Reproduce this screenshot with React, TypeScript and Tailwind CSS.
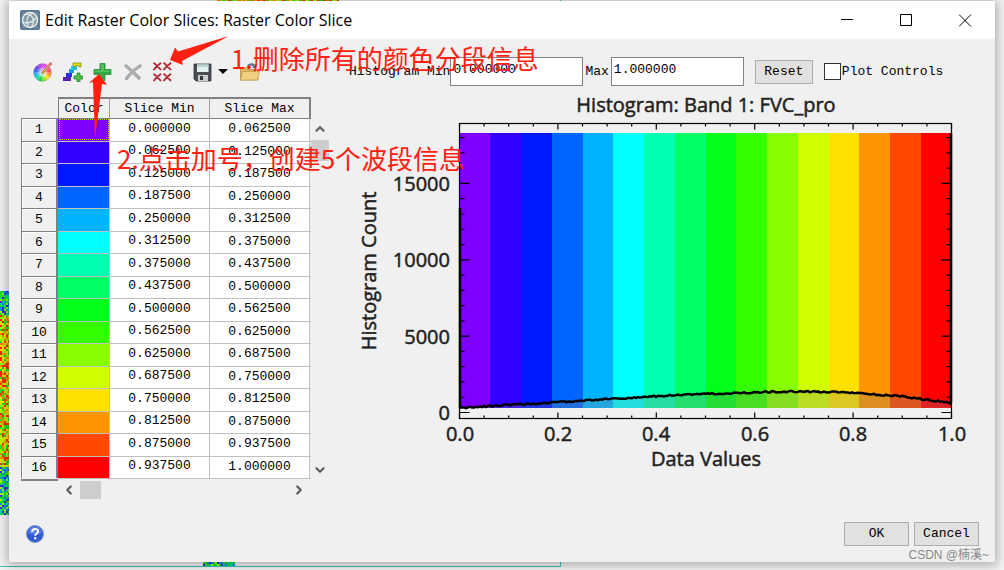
import { ReactNode } from "react";
import { ChevronDown, ChevronLeft, ChevronRight, ChevronUp } from "lucide-react";

const SLICES = [
  { color: "#7f00ff", min: "0.000000", max: "0.062500" },
  { color: "#3300ff", min: "0.062500", max: "0.125000" },
  { color: "#0019ff", min: "0.125000", max: "0.187500" },
  { color: "#0066ff", min: "0.187500", max: "0.250000" },
  { color: "#00b2ff", min: "0.250000", max: "0.312500" },
  { color: "#00ffff", min: "0.312500", max: "0.375000" },
  { color: "#00ffb2", min: "0.375000", max: "0.437500" },
  { color: "#00ff66", min: "0.437500", max: "0.500000" },
  { color: "#00ff19", min: "0.500000", max: "0.562500" },
  { color: "#33ff00", min: "0.562500", max: "0.625000" },
  { color: "#88ff00", min: "0.625000", max: "0.687500" },
  { color: "#d0ff00", min: "0.687500", max: "0.750000" },
  { color: "#ffe100", min: "0.750000", max: "0.812500" },
  { color: "#ff9500", min: "0.812500", max: "0.875000" },
  { color: "#ff4800", min: "0.875000", max: "0.937500" },
  { color: "#ff0000", min: "0.937500", max: "1.000000" },
];

// small repeatable pseudo random, so every render draws the same speckles
const rand = (n: number) => {
  const s = Math.sin(n * 12.9898 + 4.1) * 43758.5453;
  return s - Math.floor(s);
};

const SPECKLE = ["#ff2a00", "#ff8a00", "#ffe100", "#9dff00", "#22e022", "#00d9a0", "#0090ff", "#3a30e0"];

const Raster = ({ cols, rows, cell, tone = "mixed", className }: { cols: number; rows: number; cell: number; tone?: "mixed" | "warm" | "cold"; className: string }) => (
  <svg className={className} width={cols * cell} height={rows * cell} shapeRendering="crispEdges" aria-hidden="true">
    {Array.from({ length: cols * rows }, (_, i) => {
      const y = Math.floor(i / cols);
      const cold = tone === "cold" || (tone === "mixed" && (y < 12 || y > rows - 25));
      const pick = cold ? 3 + Math.floor(rand(i) * 5) : Math.floor(rand(i) * 5);
      return <rect key={i} x={(i % cols) * cell} y={y * cell} width={cell} height={cell} fill={SPECKLE[pick]} />;
    })}
  </svg>
);

const ToolButton = ({ label, children, className = "" }: { label: string; children: ReactNode; className?: string }) => (
  <button type="button" aria-label={label} className={`flex size-5 shrink-0 items-center justify-center ${className}`}>
    {children}
  </button>
);

const AppIcon = () => (
  <svg className="size-5 shrink-0" viewBox="0 0 20 20" aria-hidden="true">
    <rect width="20" height="20" rx="2" fill="#6d8aa3" />
    <rect x="1" y="1" width="18" height="18" rx="1" fill="none" stroke="#4d6a85" />
    <circle cx="10" cy="10" r="7.5" fill="#8b9daa" stroke="#e8ecef" strokeWidth="1.4" />
    <path d="M4 5c4-2 8 0 9 4s0 6-2 8M3 12c3 2 9 1 13-4M12 3c-5 3-6 8-4 13" fill="none" stroke="#e3e8eb" strokeWidth="1.3" />
  </svg>
);

const WHEEL = ["#ff6fd0", "#ff5a5a", "#ff9a3c", "#ffe23c", "#9be83c", "#2fd24a", "#27d9b0", "#2fb4f0", "#3c6cf0", "#7a4cf0", "#b84cf0", "#f04cf0"];

const ColorWheelIcon = () => (
  <svg className="size-5" viewBox="0 0 20 20">
    {WHEEL.map((c, i) => {
      const a = ((i * 30 - 60) * Math.PI) / 180;
      const b = ((i * 30 - 29) * Math.PI) / 180;
      return (
        <path key={c} fill={c} d={`M9.5 10.5L${9.5 + 9 * Math.cos(a)} ${10.5 + 9 * Math.sin(a)}A9 9 0 0 1 ${9.5 + 9 * Math.cos(b)} ${10.5 + 9 * Math.sin(b)}Z`} />
      );
    })}
    <circle cx="9.5" cy="10.5" r="5" fill="#fff" opacity=".35" />
    <circle cx="9.5" cy="10.5" r="3" fill="#fff" opacity=".45" />
    <circle cx="9.5" cy="10.5" r="8.6" fill="none" stroke="#777" strokeWidth=".6" opacity=".5" />
    <path d="M9 11.500L16 3.500" stroke="#8a6a2a" strokeWidth="2.2" />
    <path d="M9.500 11L16 3.500" stroke="#f2cf7a" strokeWidth="1.1" />
    <path d="M16 3.500L18.500 1" stroke="#d9737a" strokeWidth="3" />
  </svg>
);

const RampIcon = () => (
  <svg className="size-5" viewBox="0 0 20 20">
    <path d="M0 19v-4h4v-2h4v6z" fill="#5b1fb0" />
    <path d="M3 15v-4h6v4z" fill="#2a32e0" />
    <path d="M6 11V7h5v4z" fill="#1597f0" />
    <path d="M8 7V4h6v4H8z" fill="#17cbd0" />
    <path d="M10 4V1h8v4h-2V3.500h-3V5z" fill="#e6dc20" stroke="#8c8a10" strokeWidth=".8" />
    <path d="M14 11h3v3h3v3h-3v3h-3v-3h-3v-3h3z" fill="#4cc24c" stroke="#1f8a2a" strokeWidth=".8" />
  </svg>
);

const PlusIcon = () => (
  <svg className="size-5" viewBox="0 0 20 20">
    <path d="M7 1.500h5v6h6v5h-6v6H7v-6H1v-5h6z" fill="#35a845" stroke="#23913a" strokeWidth=".8" strokeLinejoin="round" />
    <path d="M8 2.500h3v6h6V10H2V8.500h6z" fill="#6fce72" opacity=".6" />
  </svg>
);

const DeleteIcon = () => (
  <svg className="size-5" viewBox="0 0 20 20">
    <path d="M3 4c4 3 9 8 13 12M17 4C12 7 7 12 3.500 16.500" fill="none" stroke="#9c9c9c" strokeWidth="3.2" strokeLinecap="round" />
    <path d="M3 4c4 3 9 8 13 12M16.500 4C12 7 7 12 3.500 16.500" fill="none" stroke="#b8b8b8" strokeWidth="1.200" />
  </svg>
);

const DeleteAllIcon = () => (
  <svg className="size-5" viewBox="0 0 20 20">
    {[[0, 0], [10, 0], [0, 11], [10, 11]].map(([x, y]) => (
      <g key={`${x}-${y}`} transform={`translate(${x} ${y})`}>
        <path d="M.5 .8c3 2 5 4.500 7.500 7.200M8 .8C5.500 3 2.500 5 .5 8" fill="none" stroke="#b52a35" strokeWidth="1.800" />
      </g>
    ))}
  </svg>
);

const SaveIcon = () => (
  <svg className="size-5" viewBox="0 0 20 20">
    <path d="M1 2h17v17H3l-2-2z" fill="#4a4e52" stroke="#33373a" strokeWidth=".8" />
    <path d="M4 2.500h11.500V10H4z" fill="#e4f0f0" />
    <path d="M4 2.500h11.500V5H4z" fill="#bdd3d6" />
    <path d="M5 13h10v6H5z" fill="#c9cccf" />
    <path d="M7 14h3v4H7z" fill="#35383b" />
  </svg>
);

const FolderIcon = () => (
  <svg className="size-5" viewBox="0 0 20 20">
    <path d="M7 4c1-3 6-4 8-1l1-1v4h-4l1.500-1.500C12 3 9 3 8 5z" fill="#54708c" />
    <path d="M.5 5.500H7l1.500 2H18V18H.5z" fill="#dcb35c" stroke="#b98c34" strokeWidth=".7" />
    <path d="M2.500 9.500h17l-2 8.500H.5z" fill="#f1cf83" stroke="#c39a44" strokeWidth=".7" />
  </svg>
);

const HelpIcon = () => (
  <svg className="size-[18px]" viewBox="0 0 18 18">
    <circle cx="9" cy="9" r="8.500" fill="#2f5bd0" stroke="#7d93c9" strokeWidth="1" />
    <path d="M2 8a7 7 0 0 1 14 0c-4 2-10 2-14 0z" fill="#6f93ea" opacity=".6" />
    <path d="M6.200 7c0-4 6-4 5.800-.5C12 8.500 9.200 8.600 9.200 10.800" fill="none" stroke="#fff" strokeWidth="2" />
    <rect x="8.100" y="12.200" width="2.200" height="2.200" fill="#fff" />
  </svg>
);

const TitleBar = () => (
  <header className="flex h-[38px] items-center bg-white pl-[11px]">
    <AppIcon />
    <h1 className="ml-[5px] flex-1 font-['Open_Sans',sans-serif] text-base leading-5 text-black">
      Edit Raster Color Slices: Raster Color Slice
    </h1>
    <button type="button" aria-label="Minimize" className="flex h-full w-[59px] items-center justify-center">
      <svg width="13" height="13" stroke="#000"><path d="M0 5.500h12" /></svg>
    </button>
    <button type="button" aria-label="Maximize" className="flex h-full w-[59px] items-center justify-center">
      <svg width="13" height="13" fill="none" stroke="#000"><path d="M.5 .5h11v11H.5z" /></svg>
    </button>
    <button type="button" aria-label="Close" className="flex h-full w-[59px] items-center justify-center">
      <svg width="13" height="13" stroke="#000"><path d="M0 .5l12 12M12 .5l-12 12" /></svg>
    </button>
  </header>
);

const Toolbar = () => (
  <div className="flex items-center pt-[18px] pl-6">
    <div className="flex gap-[10px]">
      <ToolButton label="Edit color"><ColorWheelIcon /></ToolButton>
      <ToolButton label="New default slices"><RampIcon /></ToolButton>
      <ToolButton label="Add slice"><PlusIcon /></ToolButton>
      <ToolButton label="Delete slice"><DeleteIcon /></ToolButton>
      <ToolButton label="Clear all slices"><DeleteAllIcon /></ToolButton>
    </div>
    <ToolButton label="Save" className="ml-5"><SaveIcon /></ToolButton>
    <button type="button" aria-label="Save options" className="ml-[5px] w-[10px]">
      <svg width="10" height="6"><path d="M0 0h10L5 5z" /></svg>
    </button>
    <ToolButton label="Open" className="ml-3"><FolderIcon /></ToolButton>
    <label htmlFor="hist-min" className="ml-[89px] shrink-0 whitespace-nowrap">Histogram Min</label>
    <input id="hist-min" defaultValue="0.000000" className="h-[29px] w-[133px] border border-[#828282] bg-white px-[2px] pb-1" />
    <label htmlFor="hist-max" className="ml-[2px]">Max</label>
    <input id="hist-max" defaultValue="1.000000" className="ml-[2px] h-[29px] w-[133px] border border-[#828282] bg-white px-[2px] pb-1" />
    <button type="button" className="ml-[11px] h-6 w-[58px] border border-[#adadad] bg-[#e1e1e1]">Reset</button>
    <input id="plot-controls" type="checkbox" className="ml-[11px] size-[17px] shrink-0 appearance-none border border-[#333] bg-white" />
    <label htmlFor="plot-controls" className="ml-px whitespace-nowrap">Plot Controls</label>
  </div>
);

const SliceTable = () => (
  <div className="w-[309px] shrink-0 pt-[10px]">
    <div className="flex">
      <table className="w-[290px] table-fixed border-separate border-spacing-0 text-center">
        <colgroup>
          <col className="w-[37px]" />
          <col className="w-[52px]" />
          <col className="w-[100px]" />
          <col className="w-[101px]" />
        </colgroup>
        <thead>
          <tr className="h-[21px] leading-4">
            <td className="p-0" />
            <th className="border-t-2 border-r border-l border-[#808080] border-r-[#a0a0a0] p-0 font-normal">Color</th>
            <th className="border-t-2 border-r border-t-[#808080] border-r-[#a0a0a0] p-0 font-normal">Slice Min</th>
            <th className="border-t-2 border-r-2 border-[#808080] p-0 font-normal">Slice Max</th>
          </tr>
        </thead>
        <tbody>
          {SLICES.map((slice, i) => (
            <tr key={slice.min} className="leading-4 odd:h-[23px] even:h-[22px]">
              <th className="border-t border-r-2 border-l border-[#808080] bg-[#f0f0f0] p-0 font-normal shadow-[inset_1px_1px_0_#fff]">
                {i + 1}
              </th>
              <td
                className={`border-t border-r p-0 ${i === 0 ? "border-t-[#808080] border-r-[#c0c0c0] outline-1 -outline-offset-2 outline-dotted outline-[#a5e02a]" : "border-[#c0c0c0]"}`}
                style={{ backgroundColor: slice.color }}
              />
              <td className={`border-t border-r border-[#c0c0c0] bg-white p-0 pb-[3px] ${i === 0 ? "border-t-[#808080]" : ""}`}>
                {slice.min}
              </td>
              <td className={`border-t p-0 ${i === 0 ? "border-[#808080]" : "border-[#c0c0c0]"}`}>
                <div className={`mr-px border-r border-[#c0c0c0] bg-white pt-[2px] ${i % 2 ? "h-[21px]" : "h-[22px]"}`}>{slice.max}</div>
              </td>
            </tr>
          ))}
        </tbody>
        <tfoot>
          <tr className="h-[3px]">
            <td className="border-b-2 border-[#808080] p-0" />
            <td colSpan={3} className="border-t border-[#c0c0c0] p-0" />
          </tr>
        </tfoot>
      </table>
      <div className="mt-[21px] flex w-[18px] flex-col items-center text-[#606060]">
        <button type="button" aria-label="Scroll up" className="flex h-[22px] items-center">
          <ChevronUp size={14} strokeWidth={4} />
        </button>
        <div className="h-[21px] w-full bg-[#cdcdcd]" />
        <div className="flex-1" />
        <button type="button" aria-label="Scroll down" className="flex h-[22px] items-center">
          <ChevronDown size={14} strokeWidth={4} />
        </button>
      </div>
    </div>
    <div className="flex h-[18px] w-[288px] items-center pl-9 text-[#606060]">
      <button type="button" aria-label="Scroll left" className="flex w-[23px] justify-center">
        <ChevronLeft size={14} strokeWidth={4} />
      </button>
      <div className="h-full w-[21px] bg-[#cdcdcd]" />
      <div className="flex-1" />
      <button type="button" aria-label="Scroll right" className="flex w-5 justify-center">
        <ChevronRight size={14} strokeWidth={4} />
      </button>
    </div>
  </div>
);

// plot geometry, in the units of the chart's viewBox
const LEFT = 459.5;
const RIGHT = 951.5;
const TOP = 123.5;
const BOTTOM = 418.5;
const ZERO = 412.5;
const PER_1000 = 15.27;

const CURVE = [[460, 408], [510, 405], [560, 402], [620, 398.5], [660, 396], [690, 394.5], [740, 393], [780, 391.5], [835, 392], [870, 394], [900, 396], [930, 400], [950, 403]];

const curvePoints = () => {
  const points: string[] = [];
  for (let x = 460; x <= 950; x += 2) {
    const k = Math.max(1, CURVE.findIndex(([cx]) => cx >= x));
    const [x0, y0] = CURVE[k - 1];
    const [x1, y1] = CURVE[k];
    const y = y0 + ((y1 - y0) * (x - x0)) / (x1 - x0) + (rand(x) - 0.5) * 1.6;
    points.push(`${x},${y.toFixed(1)}`);
  }
  return points.join(" ");
};

const Histogram = () => {
  const line = curvePoints();
  const step = (RIGHT - LEFT) / 16;
  return (
    <svg
      viewBox="350 92 635 385"
      className="h-auto min-w-0 flex-1 font-['Open_Sans',sans-serif] text-[20px]"
      role="img"
      aria-label="Histogram of band 1"
    >
      <g shapeRendering="crispEdges">
        {SLICES.map((slice, i) => {
          const x = Math.round(LEFT + i * step);
          return <rect key={slice.min} x={x} y="133" width={Math.round(LEFT + (i + 1) * step) - x} height="275" fill={slice.color} />;
        })}
      </g>
      <polygon points={`460,408 ${line} 951,408`} fill="#808080" opacity=".27" />
      <polyline points={`460,208 460,408 ${line} 951,402 951,133`} fill="none" stroke="#000" strokeWidth="2.500" />
      <rect x={LEFT} y={TOP} width={RIGHT - LEFT} height={BOTTOM - TOP} fill="none" stroke="#000" strokeWidth="1.200" />
      <g stroke="#000" strokeWidth="1.200">
        {Array.from({ length: 21 }, (_, i) => {
          const x = LEFT + (i * (RIGHT - LEFT)) / 20;
          const len = i % 4 ? 3 : 6;
          return <path key={i} d={`M${x} ${TOP}v${len}M${x} ${BOTTOM}v${-len}`} />;
        })}
        {Array.from({ length: 19 }, (_, i) => {
          const y = ZERO - i * PER_1000;
          const len = i % 5 ? 5 : 10;
          return <path key={i} d={`M${LEFT} ${y}h${len}M${RIGHT} ${y}h${-len}`} />;
        })}
      </g>
      <g fill="#222" stroke="#222" strokeWidth=".5">
        <text x="706" y="112" textAnchor="middle">Histogram: Band 1: FVC_pro</text>
        {["0", "5000", "10000", "15000"].map((label, i) => (
          <text key={label} x="450" y={420 - Math.round(i * 5 * PER_1000)} textAnchor="end">{label}</text>
        ))}
        {["0.0", "0.2", "0.4", "0.6", "0.8", "1.0"].map((label, i) => (
          <text key={label} x={Math.round(LEFT + (i * (RIGHT - LEFT)) / 5)} y="441" textAnchor="middle">{label}</text>
        ))}
        <text x="706" y="466" textAnchor="middle">Data Values</text>
        <text transform="translate(376 271) rotate(-90)" textAnchor="middle">Histogram Count</text>
      </g>
    </svg>
  );
};

const Annotations = () => (
  <div className="pointer-events-none absolute inset-0 font-['Noto_Sans_CJK_SC',sans-serif] text-[26px] leading-8 whitespace-nowrap text-[#ff2010]">
    <svg className="absolute top-0 left-0" width="240" height="150" fill="#ff2010" aria-hidden="true">
      <path d="M170 60L175 47.500L178 51.500L229 36L182 61L183 65Z" />
      <path d="M99 74L107 85L102 84L95 139L93 82L89 83Z" />
    </svg>
    <p className="absolute top-[42px] left-[231px]">1.删除所有的颜色分段信息</p>
    <p className="absolute top-[142px] left-[117px]">2.点击加号，创建5个波段信息</p>
  </div>
);

export default function App() {
  return (
    <div className="relative min-h-screen overflow-hidden bg-[#f3f3f3] px-[9px] pt-px pb-2 font-['Liberation_Mono',monospace] text-[13px] text-black">
      <div className="absolute top-0 left-0 h-[567px] w-[561px] border-r border-b border-[#3fbfbf]" />
      <Raster cols={5} rows={112} cell={2} className="absolute top-[291px] left-0" />
      <Raster cols={61} rows={1} cell={2} tone="warm" className="absolute top-0 left-[217px]" />
      <Raster cols={16} rows={2} cell={2} tone="cold" className="absolute top-[562px] left-[203px]" />

      <main className="relative bg-[#f0f0f0] shadow-[0_1px_10px_2px_rgba(0,0,0,0.3)]">
        <TitleBar />
        <Toolbar />
        <div className="flex items-start gap-5 pt-px pr-[10px] pl-3">
          <SliceTable />
          <div className="flex min-w-0 flex-1 pt-[5px]">
            <Histogram />
          </div>
        </div>
        <footer className="flex items-center gap-[5px] pt-[23px] pr-4 pb-4 pl-[17px]">
          <button type="button" aria-label="Help" className="mr-auto"><HelpIcon /></button>
          <button type="button" className="h-6 w-[65px] border border-[#adadad] bg-[#e1e1e1]">OK</button>
          <button type="button" className="h-6 w-[65px] border border-[#adadad] bg-[#e1e1e1]">Cancel</button>
        </footer>
      </main>

      <Annotations />
      <p className="absolute right-[15px] bottom-[7px] font-['Liberation_Sans','Noto_Sans_CJK_SC',sans-serif] text-[12px] leading-4 text-[#888]">
        CSDN @楠溪~
      </p>
    </div>
  );
}
